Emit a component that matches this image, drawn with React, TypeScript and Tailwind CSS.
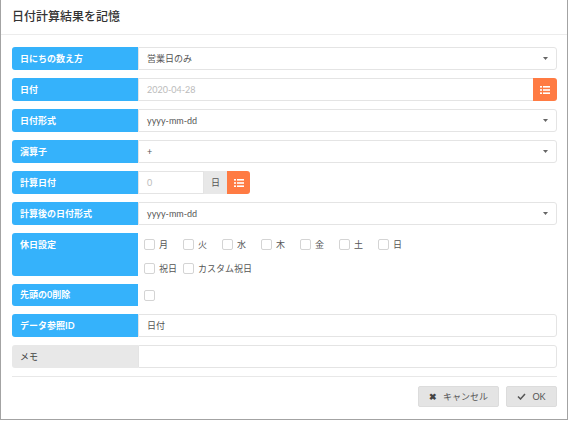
import React from 'react';

const font = "font-['Lato','Noto_Sans_CJK_JP',sans-serif]";

const Label: React.FC<{ text: string; gray?: boolean; tall?: boolean }> = ({ text, gray, tall }) => (
  <div
    className={`w-[126px] shrink-0 rounded-l-[3px] px-[8px] text-[9px] font-bold flex ${
      tall ? 'items-start pt-[5px]' : 'items-center'
    } ${gray ? 'bg-[#e8e8e8] text-[#444] font-normal' : 'bg-[#35b2fb] text-white'}`}
  >
    {text}
  </div>
);

const Caret = () => (
  <svg width="5" height="3" viewBox="0 0 5 3" className="shrink-0">
    <path d="M0 0h5L2.5 3z" fill="#666" />
  </svg>
);

const ListIcon = () => (
  <svg width="10" height="8" viewBox="0 0 10 8">
    <rect x="0" y="0" width="2" height="1.6" fill="#fff" />
    <rect x="3" y="0" width="7" height="1.6" fill="#fff" />
    <rect x="0" y="3.2" width="2" height="1.6" fill="#fff" />
    <rect x="3" y="3.2" width="7" height="1.6" fill="#fff" />
    <rect x="0" y="6.4" width="2" height="1.6" fill="#fff" />
    <rect x="3" y="6.4" width="7" height="1.6" fill="#fff" />
  </svg>
);

const SelectBox: React.FC<{ value: string }> = ({ value }) => (
  <div className="flex-1 flex items-center justify-between border border-[#e4e4e4] rounded-r-[3px] pl-[8px] pr-[8px] text-[9px] text-[#555]">
    <span>{value}</span>
    <Caret />
  </div>
);

const TextBox: React.FC<{ value: string; muted?: boolean }> = ({ value, muted }) => (
  <div
    className={`flex-1 flex items-center border border-[#e4e4e4] rounded-r-[3px] pl-[8px] text-[9px] ${
      muted ? 'text-[#bbb]' : 'text-[#555]'
    }`}
  >
    {value}
  </div>
);

const Check: React.FC<{ text?: string; w?: string }> = ({ text, w }) => (
  <div className={`flex items-center gap-[4px] text-[9px] text-[#555] ${w ?? ''}`}>
    <span className="w-[11px] h-[11px] rounded-[2px] border border-[#d4d4d4] bg-white" />
    {text && <span>{text}</span>}
  </div>
);

export default function App() {
  const days = ['月', '火', '水', '木', '金', '土', '日'];
  return (
    <div className={`w-[568px] h-[420px] bg-white border border-t-0 border-[#a3a3a3] ${font}`}>
      <div className="h-[35px] border-b border-[#ececec] pl-[11px] flex items-center text-[12px] text-[#333] font-medium">
        日付計算結果を記憶
      </div>

      <div className="pt-[12px] pl-[11px] pr-[10px] flex flex-col gap-[8px]">
        <div className="h-[23px] flex">
          <Label text="日にちの数え方" />
          <SelectBox value="営業日のみ" />
        </div>

        <div className="h-[23px] flex">
          <Label text="日付" />
          <div className="flex-1 flex items-center border border-r-0 border-[#e4e4e4] pl-[8px] text-[9px] text-[#bbb]">
            2020-04-28
          </div>
          <button className="w-[24px] bg-[#ff7b43] rounded-r-[3px] flex items-center justify-center">
            <ListIcon />
          </button>
        </div>

        <div className="h-[23px] flex">
          <Label text="日付形式" />
          <SelectBox value="yyyy-mm-dd" />
        </div>

        <div className="h-[23px] flex">
          <Label text="演算子" />
          <SelectBox value="+" />
        </div>

        <div className="h-[23px] flex">
          <Label text="計算日付" />
          <div className="w-[66px] flex items-center border border-[#e4e4e4] pl-[8px] text-[9px] text-[#bbb]">0</div>
          <div className="w-[23px] bg-[#e8e8e8] flex items-center justify-center text-[9px] text-[#555]">日</div>
          <button className="w-[23px] bg-[#ff7b43] rounded-r-[3px] flex items-center justify-center">
            <ListIcon />
          </button>
        </div>

        <div className="h-[23px] flex">
          <Label text="計算後の日付形式" />
          <SelectBox value="yyyy-mm-dd" />
        </div>

        <div className="h-[43px] flex">
          <Label text="休日設定" tall />
          <div className="flex-1 pl-[6px] pt-[5px] flex flex-col gap-[10px]">
            <div className="flex">
              {days.map((d) => (
                <Check key={d} text={d} w="w-[39px]" />
              ))}
            </div>
            <div className="flex">
              <Check text="祝日" w="w-[39px]" />
              <Check text="カスタム祝日" />
            </div>
          </div>
        </div>

        <div className="h-[22px] flex">
          <Label text="先頭の0削除" />
          <div className="flex-1 flex items-center pl-[6px]">
            <Check />
          </div>
        </div>

        <div className="h-[23px] flex">
          <Label text="データ参照ID" />
          <TextBox value="日付" />
        </div>

        <div className="h-[23px] flex">
          <Label text="メモ" gray />
          <TextBox value="" />
        </div>
      </div>

      <div className="ml-[11px] mr-[10px] mt-[8px] border-t border-[#e8e8e8]" />

      <div className="flex justify-end gap-[7px] pr-[10px] pt-[9px]">
        <button className="w-[81px] h-[21px] rounded-[2px] bg-[#e4e4e4] border border-[#dcdcdc] flex items-center justify-center gap-[6px] text-[9px] text-[#555]">
          <span className="text-[9px] font-bold text-[#444]">✖</span>
          キャンセル
        </button>
        <button className="w-[51px] h-[21px] rounded-[2px] bg-[#e4e4e4] border border-[#dcdcdc] flex items-center justify-center gap-[6px] text-[9px] text-[#555]">
          <svg width="9" height="7" viewBox="0 0 9 7">
            <path d="M1 3.5l2.5 2.5L8 1" stroke="#555" strokeWidth="1.5" fill="none" />
          </svg>
          OK
        </button>
      </div>
    </div>
  );
}
